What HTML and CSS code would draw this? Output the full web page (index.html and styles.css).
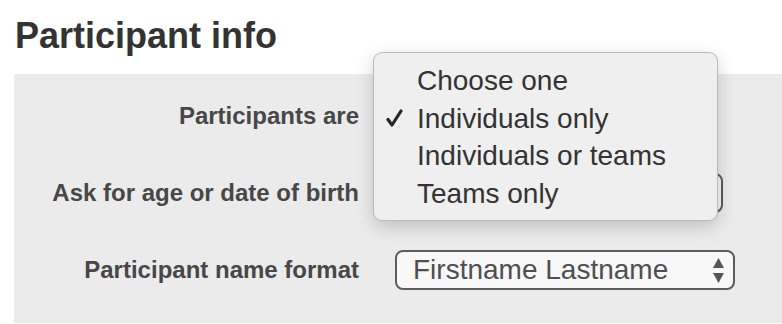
FILE: index.html
```html
<!DOCTYPE html>
<html lang="en">
<head>
    <meta charset="UTF-8">
    <meta name="viewport" content="width=device-width, initial-scale=1.0">
    <title>Participant info</title>
    <link rel="stylesheet" href="styles.css">
</head>
<body>
    <h2 class="section-title">Participant info</h2>

    <div class="panel">
        <div class="form-row">
            <label class="field-label">Participants are</label>
            <div class="control">
                <div class="select select-narrow">
                    <span></span>
                    <svg class="arrows" width="11" height="26" viewBox="0 0 11 26"><polygon points="5.5,0 11,10 0,10"/><polygon points="0,15 11,15 5.5,25"/></svg>
                </div>

                <!-- open menu of the first select -->
                <ul class="menu">
                    <li class="menu-item"><span class="check"></span>Choose one</li>
                    <li class="menu-item"><span class="check"><svg width="17" height="18" viewBox="0 0 17 18"><path d="M2 10.5 L6 16 L15 2" fill="none" stroke="#262626" stroke-width="3.2" stroke-linecap="round" stroke-linejoin="round"/></svg></span>Individuals only</li>
                    <li class="menu-item"><span class="check"></span>Individuals or teams</li>
                    <li class="menu-item"><span class="check"></span>Teams only</li>
                </ul>
            </div>
        </div>

        <div class="form-row">
            <label class="field-label">Ask for age or date of birth</label>
            <div class="control">
                <div class="select select-mid">
                    <span></span>
                    <svg class="arrows" width="11" height="26" viewBox="0 0 11 26"><polygon points="5.5,0 11,10 0,10"/><polygon points="0,15 11,15 5.5,25"/></svg>
                </div>
            </div>
        </div>

        <div class="form-row">
            <label class="field-label">Participant name format</label>
            <div class="control">
                <div class="select select-wide">
                    <span>Firstname Lastname</span>
                    <svg class="arrows" width="11" height="26" viewBox="0 0 11 26"><polygon points="5.5,0 11,10 0,10"/><polygon points="0,15 11,15 5.5,25"/></svg>
                </div>
            </div>
        </div>
    </div>
</body>
</html>
```

FILE: styles.css
```css
body {
    margin: 0;
    padding: 0;
    font-family: "Liberation Sans", Arial, Helvetica, sans-serif;
    background: white;
    overflow: hidden;
}
.section-title {
    margin: 18px 0 20px 15px;
    font-size: 36px;
    line-height: 36px;
    font-weight: bold;
    color: #333;
}
.panel {
    margin-left: 14px;
    background: #ebebeb;
    padding: 22px 0 33px 0;
    display: flex;
    flex-direction: column;
    gap: 37px;
}
.form-row {
    display: grid;
    grid-template-columns: 345px 1fr;
    column-gap: 36px;
    align-items: center;
}
.form-row:first-child {
    position: relative;
    z-index: 2;
}
.field-label {
    text-align: right;
    font-size: 24px;
    font-weight: bold;
    color: #474747;
}
.control {
    position: relative;
}
.select {
    box-sizing: border-box;
    height: 40px;
    border: 2px solid #5c5c5c;
    border-radius: 8px;
    background: #f8f8f8;
    display: flex;
    align-items: center;
    justify-content: space-between;
    padding: 0 9px 0 16px;
    font-size: 28px;
    color: #4f4f4f;
}
.select-wide {
    width: 340px;
}
.select-mid {
    width: 328px;
}
.select-narrow {
    width: 316px;
}
.arrows {
    fill: #555;
    margin-top: 1px;
}
.menu {
    position: absolute;
    z-index: 10;
    left: -22px;
    top: -44px;
    box-sizing: border-box;
    width: 345px;
    height: 169px;
    margin: 0;
    padding: 9px 0 10px 0;
    list-style: none;
    background: #efefef;
    border: 1px solid rgba(0, 0, 0, 0.22);
    border-radius: 9px;
    box-shadow: 0 6px 18px rgba(0, 0, 0, 0.18);
}
.menu-item {
    display: flex;
    align-items: center;
    height: 37.5px;
    line-height: 37.5px;
    font-size: 28px;
    color: #333;
}
.check {
    width: 31px;
    padding-left: 12px;
    display: flex;
    align-items: center;
}
```
